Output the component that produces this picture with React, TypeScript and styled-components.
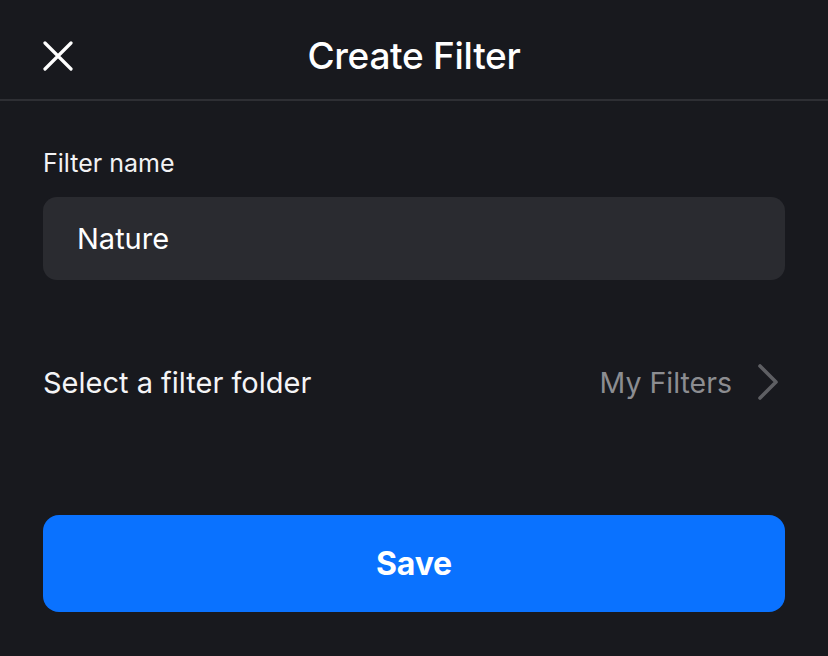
import React from "react";
import styled, { createGlobalStyle } from "styled-components";

const GlobalStyle = createGlobalStyle`
  html, body {
    margin: 0;
    padding: 0;
    background: #18191e;
  }
  body {
    font-family: Inter, "Noto Sans", sans-serif;
    color: #ffffff;
    -webkit-font-smoothing: antialiased;
  }
`;

const Screen = styled.div`
  width: 828px;
  height: 656px;
  background: #18191e;
  display: flex;
  flex-direction: column;
`;

const Header = styled.header`
  height: 101px;
  display: grid;
  grid-template-columns: 1fr auto 1fr;
  align-items: center;
  padding: 0 43px;
  box-sizing: border-box;
  border-bottom: 2px solid #2e2f34;
`;

const CloseButton = styled.button`
  justify-self: start;
  width: 30px;
  height: 30px;
  padding: 0;
  margin-top: 12px;
  border: none;
  background: none;
  display: flex;
  cursor: pointer;
`;

const Title = styled.h1`
  margin: 12px 0 0;
  font-size: 37px;
  line-height: 40px;
  font-weight: 500;
  letter-spacing: -0.3px;
  color: #ffffff;
`;

const Body = styled.main`
  display: flex;
  flex-direction: column;
  padding: 48px 43px 0;
`;

const Label = styled.label`
  font-size: 25px;
  font-weight: 400;
  color: #f2f2f4;
  line-height: 28px;
`;

const Field = styled.div`
  margin-top: 20px;
  height: 83px;
  border-radius: 14px;
  background: #2a2b30;
  display: flex;
  align-items: center;
  padding: 0 34px;
`;

const FieldValue = styled.span`
  font-size: 29px;
  color: #ffffff;
`;

const FolderRow = styled.div`
  margin-top: 82px;
  height: 40px;
  display: flex;
  align-items: center;
  justify-content: space-between;
  padding-right: 5px;
`;

const RowLabel = styled.span`
  font-size: 29px;
  color: #f4f4f6;
`;

const RowValue = styled.span`
  display: flex;
  align-items: center;
  gap: 24px;
  font-size: 28.5px;
  color: #8c8d91;
`;

const SaveButton = styled.button`
  margin-top: 113px;
  height: 97px;
  border: none;
  border-radius: 16px;
  background: #0a72ff;
  color: #ffffff;
  font-family: Inter, "Noto Sans", sans-serif;
  font-size: 32px;
  font-weight: 700;
  letter-spacing: -0.2px;
  cursor: pointer;
`;

export default function App() {
  return (
    <>
      <GlobalStyle />
      <Screen>
        <Header>
          <CloseButton aria-label="Close">
            <svg width="30" height="30" viewBox="0 0 30 30">
              <path
                d="M2 2 L28 28 M28 2 L2 28"
                stroke="#ffffff"
                strokeWidth="3.2"
                strokeLinecap="round"
              />
            </svg>
          </CloseButton>
          <Title>Create Filter</Title>
          <span />
        </Header>
        <Body>
          <Label>Filter name</Label>
          <Field>
            <FieldValue>Nature</FieldValue>
          </Field>
          <FolderRow>
            <RowLabel>Select a filter folder</RowLabel>
            <RowValue>
              My Filters
              <svg width="24" height="36" viewBox="0 0 24 36">
                <path
                  d="M4 2 L20 18 L4 34"
                  fill="none"
                  stroke="#5e5f63"
                  strokeWidth="3.6"
                  strokeLinecap="round"
                  strokeLinejoin="round"
                />
              </svg>
            </RowValue>
          </FolderRow>
          <SaveButton>Save</SaveButton>
        </Body>
      </Screen>
    </>
  );
}
